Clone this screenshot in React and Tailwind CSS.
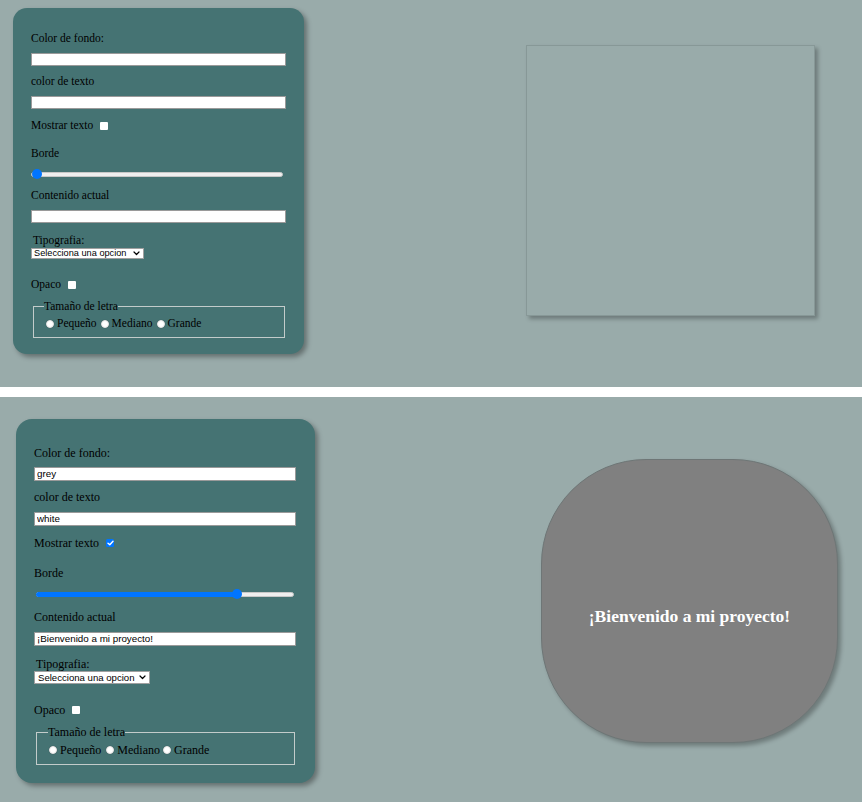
import React from "react";

const serif = "font-['Liberation_Serif','Times_New_Roman',serif] text-black";
const sans = "font-['Liberation_Sans',Arial,sans-serif] text-black";

function Check({ checked }) {
  if (checked) {
    return (
      <span className="ml-[7px] inline-flex w-[8px] h-[8px] items-center justify-center rounded-[1.5px] bg-[#0075ff]">
        <svg width="7" height="6" viewBox="0 0 7 6" fill="none">
          <path d="M1 3.2 L2.8 4.8 L6 1.2" stroke="white" strokeWidth="1.4" strokeLinecap="round" strokeLinejoin="round" />
        </svg>
      </span>
    );
  }
  return <span className="ml-[7px] inline-block w-[8px] h-[8px] rounded-[1px] bg-white" />;
}

function Radio() {
  return <span className="inline-block w-[8px] h-[8px] rounded-full bg-white border border-[#e4e4e4] shadow-[0_0_1px_rgba(0,0,0,0.3)]" />;
}

function Chevron() {
  return (
    <svg width="7" height="5" viewBox="0 0 7 5" fill="none">
      <path d="M1 1 L3.5 3.5 L6 1" stroke="black" strokeWidth="1.2" strokeLinecap="round" strokeLinejoin="round" />
    </svg>
  );
}

function TopPanel() {
  const lab = `${serif} text-[11.5px] leading-[13.5px]`;
  const inp = `${sans} block w-[255px] h-[13.5px] bg-white border border-[#9a9a9a] px-[2px] text-[9.5px] outline-none`;
  return (
    <div className="ml-[13px] w-[291px] rounded-[14px] bg-[#457373] pl-[18px] pt-[24px] pb-[16px] shadow-[3px_3px_5px_rgba(0,0,0,0.35)]">
      <div className={lab}>Color de fondo:</div>
      <input readOnly value="" className={`${inp} mt-[7px]`} />
      <div className={`${lab} mt-[9px]`}>color de texto</div>
      <input readOnly value="" className={`${inp} mt-[7px]`} />
      <div className={`${lab} mt-[10px] flex items-center`}>
        <span>Mostrar texto</span>
        <Check checked={false} />
      </div>
      <div className={`${lab} mt-[14px]`}>Borde</div>
      <div className="relative mt-[9px] w-[252px] h-[10px] flex items-center">
        <div className="w-full h-[5px] rounded-full bg-[#efefef] border border-[#c8c8c8]" />
        <div className="absolute left-[1px] top-0 w-[10px] h-[10px] rounded-full bg-[#0075ff]" />
      </div>
      <div className={`${lab} mt-[10px]`}>Contenido actual</div>
      <input readOnly value="" className={`${inp} mt-[7px]`} />
      <div className={`${lab} mt-[11px] ml-[2px]`}>Tipografia:</div>
      <div className={`${sans} w-[113px] h-[11.5px] bg-white border border-[#a0a0a0] pl-[2px] pr-[3px] flex items-center justify-between text-[9.2px] leading-none`}>
        <span>Selecciona una opcion</span>
        <Chevron />
      </div>
      <div className={`${lab} mt-[19px] flex items-center`}>
        <span>Opaco</span>
        <Check checked={false} />
      </div>
      <fieldset className="mt-[8px] ml-[2px] w-[252px] border border-[#c3cccb] px-[10px] pb-[6px]">
        <legend className={`${lab} p-0`}>Tamaño de letra</legend>
        <div className={`${lab} mt-[4px] flex items-center`}>
          <span className="ml-[2px] mr-[3px] flex"><Radio /></span>
          <span>Pequeño</span>
          <span className="ml-[4px] mr-[3px] flex"><Radio /></span>
          <span>Mediano</span>
          <span className="ml-[4px] mr-[3px] flex"><Radio /></span>
          <span>Grande</span>
        </div>
      </fieldset>
    </div>
  );
}

function BottomPanel() {
  const lab = `${serif} text-[12px] leading-[14px]`;
  const inp = `${sans} block w-[262px] h-[14px] bg-white border border-[#9a9a9a] px-[2px] text-[9.8px] outline-none`;
  return (
    <div className="ml-[16px] w-[299px] rounded-[16px] bg-[#457373] pl-[18px] pt-[27px] pb-[18px] shadow-[3px_3px_5px_rgba(0,0,0,0.35)]">
      <div className={lab}>Color de fondo:</div>
      <input readOnly value="grey" className={`${inp} mt-[7px]`} />
      <div className={`${lab} mt-[9px]`}>color de texto</div>
      <input readOnly value="white" className={`${inp} mt-[8px]`} />
      <div className={`${lab} mt-[10px] flex items-center`}>
        <span>Mostrar texto</span>
        <Check checked={true} />
      </div>
      <div className={`${lab} mt-[16px]`}>Borde</div>
      <div className="relative mt-[9px] ml-[2px] w-[258px] h-[10px] flex items-center">
        <div className="w-full h-[5px] rounded-full bg-[#efefef] border border-[#c8c8c8]" />
        <div className="absolute left-0 top-[2.5px] w-[201px] h-[5px] rounded-full bg-[#0075ff]" />
        <div className="absolute left-[196px] top-0 w-[10px] h-[10px] rounded-full bg-[#0075ff]" />
      </div>
      <div className={`${lab} mt-[11px]`}>Contenido actual</div>
      <input readOnly value="¡Bienvenido a mi proyecto!" className={`${inp} mt-[8px]`} />
      <div className={`${lab} mt-[11px] ml-[2px]`}>Tipografia:</div>
      <div className={`${sans} w-[116px] h-[13px] bg-white border border-[#a0a0a0] pl-[3px] pr-[3px] flex items-center justify-between text-[9.6px] leading-none`}>
        <span>Selecciona una opcion</span>
        <Chevron />
      </div>
      <div className={`${lab} mt-[19px] flex items-center`}>
        <span>Opaco</span>
        <Check checked={false} />
      </div>
      <fieldset className="mt-[8px] ml-[2px] w-[259px] border border-[#c3cccb] px-[11px] pb-[7px]">
        <legend className={`${lab} p-0`}>Tamaño de letra</legend>
        <div className={`${lab} mt-[4px] flex items-center`}>
          <span className="ml-[1px] mr-[3px] flex"><Radio /></span>
          <span>Pequeño</span>
          <span className="ml-[5px] mr-[3px] flex"><Radio /></span>
          <span>Mediano</span>
          <span className="ml-[3px] mr-[3px] flex"><Radio /></span>
          <span>Grande</span>
        </div>
      </fieldset>
    </div>
  );
}

export default function App() {
  return (
    <div className="w-[862px] bg-white">
      <section className="h-[387px] bg-[#99abaa] pt-[8px] flex items-start">
        <TopPanel />
        <div className="ml-[222px] mt-[37px] w-[289px] h-[271px] border border-[#879897] shadow-[3px_3px_4px_rgba(0,0,0,0.28)]" />
      </section>
      <div className="h-[10px] bg-white" />
      <section className="h-[405px] bg-[#99abaa] pt-[22px] flex items-start">
        <BottomPanel />
        <div className="ml-[226px] mt-[40px] w-[297px] h-[284px] rounded-[105px] bg-[#808080] border border-[#6e7676] shadow-[3px_3px_4px_rgba(0,0,0,0.28)] flex items-center justify-center pt-[29px]">
          <span className="font-['Liberation_Serif','Times_New_Roman',serif] font-bold text-white text-[17.5px] leading-[20px]">¡Bienvenido a mi proyecto!</span>
        </div>
      </section>
    </div>
  );
}
